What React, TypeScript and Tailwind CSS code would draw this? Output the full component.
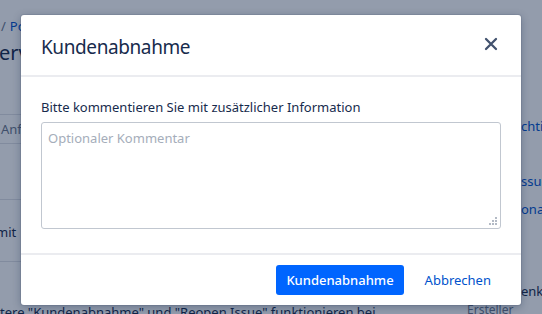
import React from "react";

function CloseIcon() {
  return (
    <svg width="16" height="16" viewBox="0 0 16 16" className="block">
      <path d="M3 3 L13 13 M13 3 L3 13" stroke="#42526e" strokeWidth="2.3" strokeLinecap="round" />
    </svg>
  );
}

function Grip() {
  return (
    <svg width="9" height="9" viewBox="0 0 9 9" className="block">
      {[
        [7, 1],
        [4, 4],
        [7, 4],
        [1, 7],
        [4, 7],
        [7, 7],
      ].map(([x, y], i) => (
        <rect key={i} x={x - 1} y={y - 1} width="2" height="2" fill="#b3bac5" />
      ))}
    </svg>
  );
}

export default function App() {
  return (
    <div
      className="relative w-[542px] h-[314px] overflow-hidden bg-white"
      style={{ fontFamily: '"Noto Sans", "Open Sans", sans-serif' }}
    >
      {/* background page */}
      <div className="flex w-full h-full">
        <div className="w-[467px] shrink-0 flex flex-col text-[13px] text-[#172b4d]">
          <div className="shrink-0 mt-[18px] h-[17px] leading-[17px] text-[#0052cc] whitespace-nowrap">
            <span className="ml-[1px] text-[#6b778c]">/</span>
            <span className="ml-[4px]">Portal</span>
          </div>
          <div className="shrink-0 mt-[4px] h-[28px] leading-[28px] text-[20px] ml-[-12px] whitespace-nowrap">
            Serviceanfrage
          </div>
          <div className="shrink-0 mt-[47px] border-t border-b border-[#dfe1e6] h-[30px] leading-[28px] text-[#6b778c] ml-[-1px] whitespace-nowrap">
            <span className="ml-[2px]">Anfragetyp</span>
          </div>
          <div className="shrink-0 mt-[55px] border-t border-b border-[#dfe1e6] h-[63px] flex items-center whitespace-nowrap">
            <span className="ml-[-4px] mt-[5px]">mit</span>
          </div>
          <div className="shrink-0 mt-[41px] leading-[18px] whitespace-nowrap">
            tere "Kundenabnahme" und "Reopen Issue" funktionieren bei
          </div>
        </div>
        <div className="flex-1 flex flex-col text-[13px] whitespace-nowrap">
          <div className="shrink-0 mt-[117px] h-[18px] leading-[18px] pl-[54px] text-[#0052cc]">chtig</div>
          <div className="shrink-0 mt-[37px] h-[18px] leading-[18px] pl-[54px] text-[#0052cc]">ssue</div>
          <div className="shrink-0 mt-[10px] h-[18px] leading-[18px] pl-[54px] text-[#0052cc]">ona</div>
          <div className="shrink-0 mt-[64px] h-[18px] leading-[18px] pl-[54px] text-[#172b4d]">enk</div>
          <div className="shrink-0 mt-[1px] h-[18px] leading-[18px] text-[#6b778c] text-[12px]">Ersteller</div>
        </div>
      </div>

      {/* blanket + modal */}
      <div className="absolute inset-0 bg-[rgba(9,30,66,0.44)]">
        <div className="ml-[21px] mt-[15px] w-[500px] h-[290px] bg-white rounded-[3px] shadow-[0_0_0_1px_rgba(9,30,66,0.08),0_2px_8px_rgba(9,30,66,0.3)] flex flex-col">
          <div className="h-[62px] shrink-0 px-5 flex items-center justify-between border-b-2 border-[#ebecf0]">
            <div className="text-[19px] text-[#172b4d] leading-[24px] tracking-[-0.4px] pt-[3px]">Kundenabnahme</div>
            <button className="w-[24px] h-[24px] flex items-center justify-center mr-[-2px] mt-[-2px]">
              <CloseIcon />
            </button>
          </div>
          <div className="shrink-0 px-5 pt-[20px] pb-[24px]">
            <div className="text-[13px] leading-[20px] text-[#172b4d]">
              Bitte kommentieren Sie mit zusätzlicher Information
            </div>
            <div className="relative mt-[5px]">
              <textarea
                className="block w-[460px] h-[107px] resize-none border border-[#c1c7d0] rounded-[3px] px-[6px] py-[5px] text-[13px] leading-[20px] text-[#172b4d] placeholder:text-[#a5adba] outline-none"
                placeholder="Optionaler Kommentar"
              />
              <div className="absolute right-[3px] bottom-[3px]">
                <Grip />
              </div>
            </div>
          </div>
          <div className="border-t-2 border-[#ebecf0] flex-1 flex items-center justify-end px-5 gap-[11px]">
            <button className="h-[30px] px-[10px] rounded-[3px] bg-[#0065ff] text-white text-[13px] font-medium leading-[30px]">
              Kundenabnahme
            </button>
            <button className="h-[30px] px-[10px] text-[#0052cc] text-[13px] leading-[30px]">
              Abbrechen
            </button>
          </div>
        </div>
      </div>
    </div>
  );
}
